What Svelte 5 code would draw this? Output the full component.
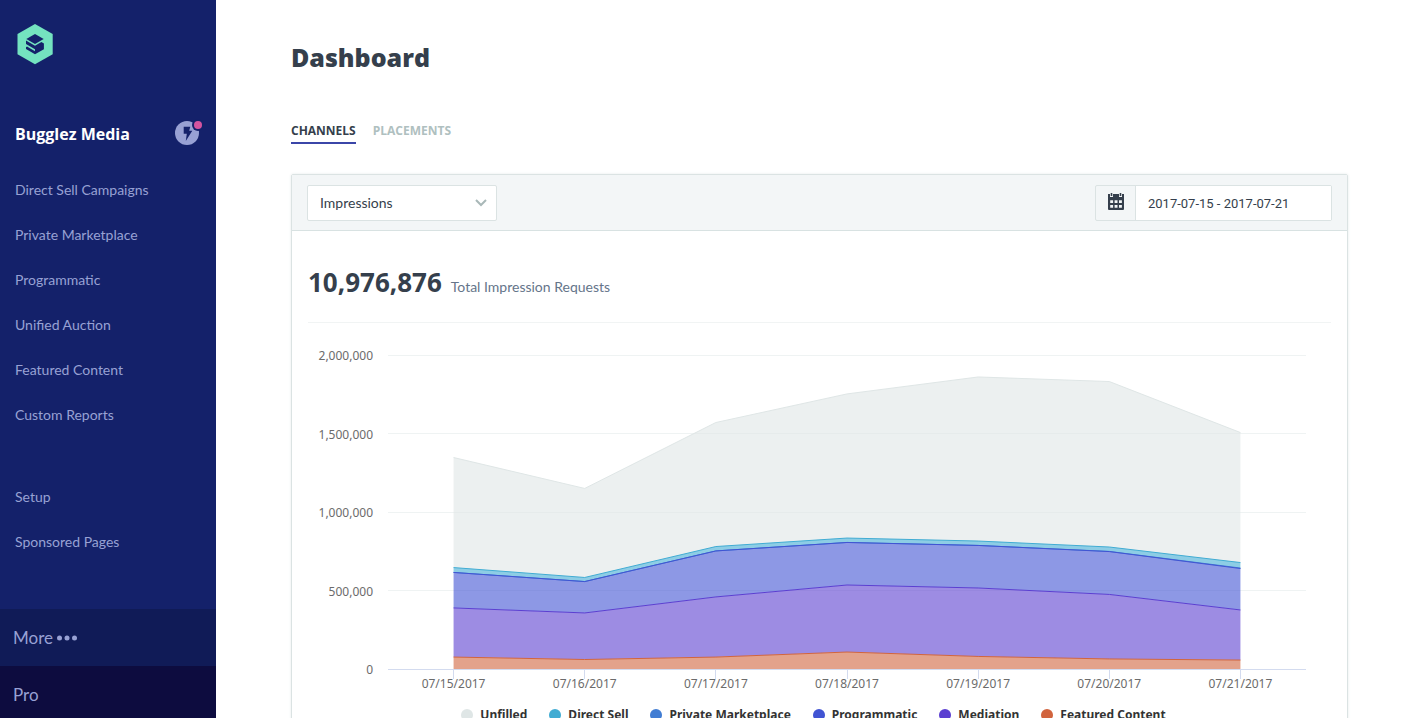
<script>
  const primaryLinks = [
    'Direct Sell Campaigns',
    'Private Marketplace',
    'Programmatic',
    'Unified Auction',
    'Featured Content',
    'Custom Reports'
  ];
  const secondaryLinks = ['Setup', 'Sponsored Pages'];
  const tabs = ['Channels', 'Placements'];

  let activeTab = $state('Channels');
  let metric = $state('Impressions');
  let range = $state('2017-07-15 - 2017-07-21');

  const days = ['07/15/2017', '07/16/2017', '07/17/2017', '07/18/2017', '07/19/2017', '07/20/2017', '07/21/2017'];
  const ticks = [2000000, 1500000, 1000000, 500000, 0];

  // Cumulative totals, topmost layer first.
  const series = [
    { name: 'Unfilled', color: '#dfe6e6', totals: [1347000, 1150000, 1570000, 1752000, 1860000, 1831000, 1506000] },
    { name: 'Direct Sell', color: '#41acd3', totals: [646000, 583000, 780000, 834000, 815000, 777000, 678000] },
    { name: 'Private Marketplace', color: '#417dd3', totals: [615000, 557000, 752000, 806000, 787000, 749000, 643000] },
    { name: 'Programmatic', color: '#4154d3', totals: [615000, 557000, 752000, 806000, 787000, 748000, 640000] },
    { name: 'Mediation', color: '#5b3fd1', totals: [389000, 357000, 459000, 535000, 516000, 475000, 376000] },
    { name: 'Featured Content', color: '#d1643e', totals: [76000, 60500, 76000, 108000, 80000, 64000, 57000] }
  ];

  let chartWidth = $state(1023);
  const plotLeft = 80;
  const plotTop = 32;
  const plotHeight = 314;
  const base = plotTop + plotHeight;
  const plotRight = $derived(chartWidth - 25);
  const step = $derived((plotRight - plotLeft) / days.length);

  const x = (i) => plotLeft + step * (i + 0.5);
  const y = (v) => base - (v / 2000000) * plotHeight;
  const line = (totals) => totals.map((v, i) => `${x(i)},${y(v)}`).join(' ');
  const band = (k) => {
    const floor = series[k + 1]?.totals ?? days.map(() => 0);
    const back = floor.map((v, i) => `${x(i)},${y(v)}`).reverse().join(' ');
    return `${line(series[k].totals)} ${back}`;
  };
</script>

<div class="app">
  <aside class="sidebar">
    <a class="logo" href="#home" aria-label="Home">
      <svg width="36" height="42" viewBox="0 0 36 42" aria-hidden="true">
        <path fill="#74e3c0" d="M18 1 35.700 11v20.300L18 41.300.500 31.300V11z" />
        <path fill="#14216a" d="m18 11 8.700 5L18 21l-8.700-5z" />
        <path fill="#14216a" d="m9 17.500 9 5.200 6.400-3.600 2.500 1.400v5.800L18 31.300l-9-5.200v-1.900l1-.600 8 4.700v-2.100l-9-5.200z" />
      </svg>
    </a>

    <div class="brand">
      <strong>Bugglez Media</strong>
      <button class="activity" aria-label="Activity">
        <svg width="30" height="28" viewBox="0 0 30 28" aria-hidden="true">
          <circle cx="12" cy="16" r="12" fill="#98a1d4" />
          <path fill="#14216a" d="M8.700 9.700h6.600l-1.100 4h3.100l-6.500 10.200 1-7.200H8.700z" />
          <circle cx="23" cy="8" r="6" fill="#14216a" />
          <circle cx="23" cy="8" r="4" fill="#d4549f" />
        </svg>
      </button>
    </div>

    <nav>
      <ul>
        {#each primaryLinks as label}
          <li><a href="#section">{label}</a></li>
        {/each}
      </ul>
      <ul>
        {#each secondaryLinks as label}
          <li><a href="#section">{label}</a></li>
        {/each}
      </ul>
    </nav>

    <button class="more">
      More
      <svg width="20" height="6" viewBox="0 0 20 6" fill="currentColor" aria-hidden="true">
        <circle cx="2.500" cy="3" r="2.500" /><circle cx="10" cy="3" r="2.500" /><circle cx="17.500" cy="3" r="2.500" />
      </svg>
    </button>
    <a class="pro" href="#pro">Pro</a>
  </aside>

  <main>
    <h1>Dashboard</h1>

    <div class="tabs" role="tablist">
      {#each tabs as tab}
        <button role="tab" aria-selected={activeTab === tab} class:active={activeTab === tab} onclick={() => (activeTab = tab)}>{tab}</button>
      {/each}
    </div>

    <section class="card">
      <header>
        <div class="metric">
          <select aria-label="Metric" bind:value={metric}>
            <option>Impressions</option>
            <option>Revenue</option>
          </select>
          <svg width="12" height="8" viewBox="0 0 12 8" fill="none" stroke="#a9b8b8" stroke-width="2" aria-hidden="true">
            <path d="m1 1 5 5 5-5" />
          </svg>
        </div>

        <div class="range">
          <label for="range" aria-label="Date range">
            <svg width="16" height="17" viewBox="0 0 16 17" aria-hidden="true">
              <path fill="#353f4c" d="M0 1h2v3h3V1h6v3h3V1h2v15a1 1 0 0 1-1 1H1a1 1 0 0 1-1-1z" />
              <path fill="#353f4c" d="M2.700 0h1.600v3H2.700zM11.700 0h1.600v3h-1.600z" />
              <path fill="#f3f6f7" d="M2.200 7.200h2.900v2.900H2.200zM6.600 7.200h2.900v2.900H6.600zM11 7.200h2.900v2.900H11zM2.200 11.900h2.900v2.900H2.200zM6.600 11.900h2.900v2.900H6.600zM11 11.900h2.900v2.900H11z" />
            </svg>
          </label>
          <input id="range" type="text" bind:value={range} />
        </div>
      </header>

      <div class="body">
        <p class="total"><strong>10,976,876</strong> <span>Total Impression Requests</span></p>

        <div class="chart" bind:clientWidth={chartWidth}>
          <svg width={chartWidth} height="381" role="img" aria-label="Impression requests by channel">
            {#each ticks as t}
              <line class="grid" x1={plotLeft} x2={plotRight} y1={Math.floor(y(t)) + 0.5} y2={Math.floor(y(t)) + 0.5} />
              <text class="axis" x="65" y={y(t) + 5} text-anchor="end">{t.toLocaleString('en-US')}</text>
            {/each}

            {#each series as s, k}
              <polygon points={band(k)} fill={s.color} fill-opacity="0.6" />
            {/each}
            {#each series as s}
              <polyline points={line(s.totals)} fill="none" stroke={s.color} stroke-width="1" />
            {/each}

            <line class="base" x1={plotLeft} x2={plotRight} y1={base + 0.5} y2={base + 0.5} />
            {#each days as day, i}
              <line class="base" x1={Math.floor(x(i)) + 0.5} x2={Math.floor(x(i)) + 0.5} y1={base} y2={base + 10} />
              <text class="axis" x={x(i)} y={base + 19} text-anchor="middle">{day}</text>
            {/each}
          </svg>
        </div>

        <ul class="legend">
          {#each series as s}
            <li><i style:background={s.color}></i>{s.name}</li>
          {/each}
        </ul>
      </div>
    </section>
  </main>
</div>

<style>
  :global(body) {
    background: #fff;
  }

  .app {
    display: flex;
    height: 100vh;
    overflow: hidden;
    color: #353f4c;
    font: 14px/20px Lato, sans-serif;
  }

  .app * {
    box-sizing: border-box;
  }

  button,
  input,
  select {
    margin: 0;
    padding: 0;
    border: 0;
    background: none;
    color: inherit;
    font: inherit;
  }

  button {
    cursor: pointer;
  }

  a {
    color: inherit;
    text-decoration: none;
  }

  ul {
    margin: 0;
    padding: 0;
    list-style: none;
  }

  svg {
    display: block;
    flex: none;
  }

  .sidebar {
    display: flex;
    flex: 0 0 216px;
    flex-direction: column;
    background: #14216a;
    color: #98a1d4;
  }

  .logo {
    align-self: flex-start;
    margin: 23px 17px 0;
  }

  .brand {
    display: flex;
    align-items: center;
    justify-content: space-between;
    padding: 51px 11px 0 15px;
  }

  .brand strong {
    padding-top: 6px;
    color: #fff;
    font: 700 16px/24px "Open Sans", sans-serif;
  }

  nav {
    display: flex;
    flex-direction: column;
    gap: 37px;
    padding: 21px 0 45px;
  }

  nav a {
    display: block;
    padding: 0 15px;
    line-height: 45px;
  }

  .more,
  .pro {
    display: flex;
    flex: none;
    gap: 4px;
    height: 57px;
    padding: 0 13px;
    align-items: center;
    font-size: 17px;
  }

  .more {
    background: #101b57;
  }

  .pro {
    background: #0d0c3f;
  }

  main {
    flex: 1;
    min-width: 0;
    padding: 40px 74px 0 75px;
  }

  h1 {
    margin: 0;
    font: 800 25px/34px "Open Sans", sans-serif;
  }

  .tabs {
    display: flex;
    gap: 17px;
    padding: 47px 0 30px;
  }

  .tabs button {
    padding-bottom: 1px;
    border-bottom: 2px solid transparent;
    color: #afc0c0;
    font: 700 12px/20px "Open Sans", sans-serif;
    text-transform: uppercase;
  }

  .tabs .active {
    border-color: #3b46a8;
    color: #353f4c;
  }

  .card {
    border: 1px solid #dbe3e3;
    border-radius: 2px;
    box-shadow: 0 0 3px #e6ecec;
  }

  header {
    display: flex;
    align-items: center;
    justify-content: space-between;
    padding: 10px 15px 9px;
    border-bottom: 1px solid #d8e2e2;
    background: #f3f6f7;
  }

  .metric {
    display: grid;
    width: 190px;
    align-items: center;
  }

  .metric > * {
    grid-area: 1 / 1;
  }

  .metric svg {
    justify-self: end;
    margin-right: 10px;
    pointer-events: none;
  }

  select {
    height: 36px;
    padding: 0 12px;
    border: 1px solid #dbe3e3;
    border-radius: 2px;
    appearance: none;
    background: #fff;
  }

  .range {
    display: flex;
    width: 237px;
    height: 36px;
    border: 1px solid #dbe3e3;
    border-radius: 2px;
  }

  .range label {
    display: flex;
    flex: 0 0 40px;
    align-items: center;
    justify-content: center;
    padding-bottom: 3px;
    border-right: 1px solid #dbe3e3;
  }

  .range input {
    flex: 1;
    min-width: 0;
    padding: 1px 12px 0;
    background: #fff;
    font: 13px/20px Roboto, sans-serif;
  }

  .body {
    padding: 0 16px 24px;
  }

  .total {
    display: flex;
    gap: 9px;
    align-items: baseline;
    margin: 0;
    padding: 34px 0 23px;
    border-bottom: 1px solid #f1f4f4;
  }

  .total strong {
    font: 700 26px/34px "Open Sans", sans-serif;
  }

  .total span {
    color: #65758a;
  }

  .chart {
    overflow: hidden;
  }

  .grid {
    stroke: #eff3f3;
  }

  .base {
    stroke: #d3dbef;
  }

  .axis {
    fill: #6b6b6b;
    font: 12px "Noto Sans", sans-serif;
  }

  .legend {
    display: flex;
    gap: 22px;
    justify-content: center;
    padding-right: 12px;
    color: #333;
    font: 700 12px/22px "Noto Sans", sans-serif;
  }

  .legend li {
    display: flex;
    gap: 7px;
    align-items: center;
    white-space: nowrap;
  }

  .legend i {
    width: 12px;
    height: 12px;
    border-radius: 50%;
  }
</style>
